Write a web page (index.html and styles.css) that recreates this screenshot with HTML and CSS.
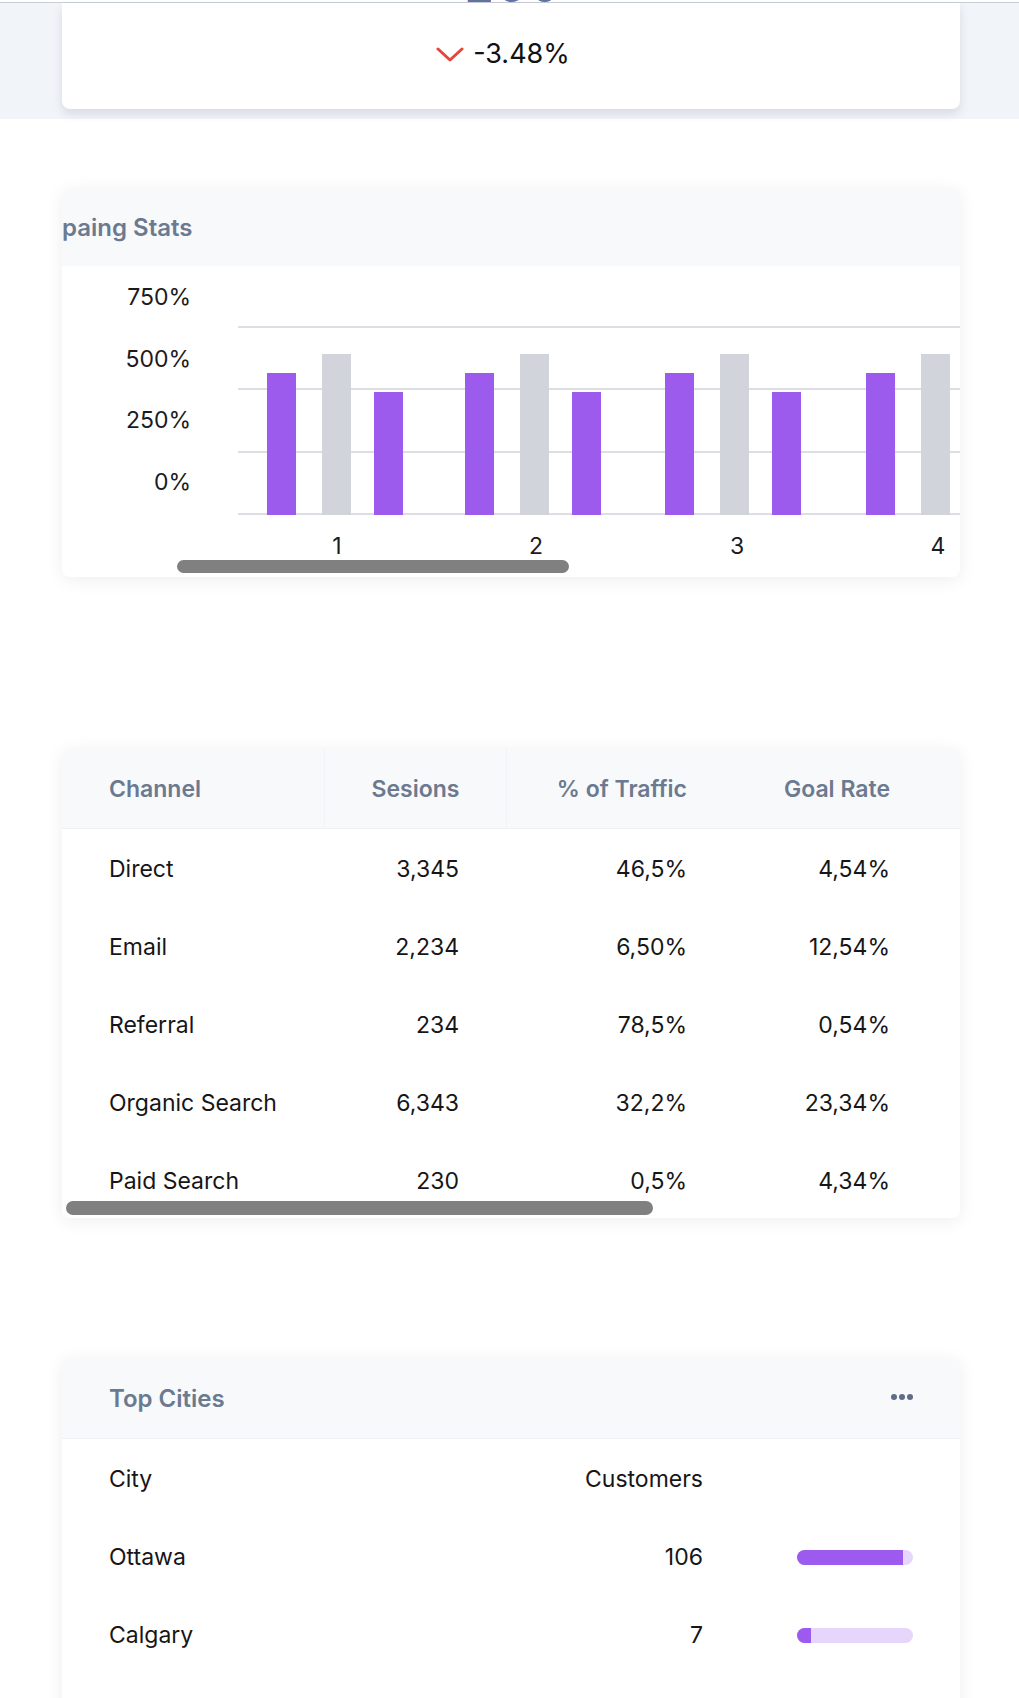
FILE: index.html
```html
<!DOCTYPE html>
<html lang="en">
<head>
<meta charset="utf-8">
<title>Dashboard</title>
<link rel="stylesheet" href="styles.css">
</head>
<body>
<div class="topbar"></div>
<div class="peek" aria-hidden="true"><span class="peek-num">250</span></div>

<section class="hero">
  <div class="stat-card">
    <div class="delta">
      <svg class="chev" width="28" height="15" viewBox="0 0 28 15"><polyline points="2,2 14,13 26,2" fill="none" stroke="#e1473d" stroke-width="3" stroke-linecap="round" stroke-linejoin="round"/></svg>
      <span class="delta-value">-3.48%</span>
    </div>
  </div>
</section>

<section class="card chart-card">
  <header class="card-head chart-head"><h2 class="card-title">paing Stats</h2></header>
  <div class="chart-body">
    <svg class="chart" width="898" height="311" viewBox="0 0 898 311">
      <g class="ylabels">
        <text x="129" y="39">750%</text>
        <text x="129" y="101">500%</text>
        <text x="129" y="162">250%</text>
        <text x="129" y="224">0%</text>
      </g>
      <g stroke="#dcdee3" stroke-width="2">
        <line x1="176" y1="61" x2="898" y2="61"/>
        <line x1="176" y1="123" x2="898" y2="123"/>
        <line x1="176" y1="186" x2="898" y2="186"/>
        <line x1="176" y1="248" x2="898" y2="248"/>
      </g>
      <g>
        <rect x="205" y="107" width="29" height="142" fill="#9d5bee"/>
        <rect x="260" y="88" width="29" height="161" fill="#d1d5db"/>
        <rect x="312" y="126" width="29" height="123" fill="#9d5bee"/>

        <rect x="403" y="107" width="29" height="142" fill="#9d5bee"/>
        <rect x="458" y="88" width="29" height="161" fill="#d1d5db"/>
        <rect x="510" y="126" width="29" height="123" fill="#9d5bee"/>

        <rect x="603" y="107" width="29" height="142" fill="#9d5bee"/>
        <rect x="658" y="88" width="29" height="161" fill="#d1d5db"/>
        <rect x="710" y="126" width="29" height="123" fill="#9d5bee"/>

        <rect x="804" y="107" width="29" height="142" fill="#9d5bee"/>
        <rect x="859" y="88" width="29" height="161" fill="#d1d5db"/>
        <rect x="911" y="126" width="29" height="123" fill="#9d5bee"/>
      </g>
      <g class="xlabels">
        <text x="275" y="288">1</text>
        <text x="474" y="288">2</text>
        <text x="675" y="288">3</text>
        <text x="876" y="288">4</text>
      </g>
    </svg>
  </div>
  <div class="thumb chart-thumb"></div>
</section>

<section class="card table-card">
  <table class="channels">
    <colgroup>
      <col class="c1"><col class="c2"><col class="c3"><col class="c4"><col class="c5">
    </colgroup>
    <thead>
      <tr>
        <th class="left">Channel</th>
        <th class="sep">Sesions</th>
        <th class="sep">% of Traffic</th>
        <th>Goal Rate</th>
        <th class="empty"></th>
      </tr>
    </thead>
    <tbody>
      <tr><td class="left">Direct</td><td>3,345</td><td>46,5%</td><td>4,54%</td><td class="empty"></td></tr>
      <tr><td class="left">Email</td><td>2,234</td><td>6,50%</td><td>12,54%</td><td class="empty"></td></tr>
      <tr><td class="left">Referral</td><td>234</td><td>78,5%</td><td>0,54%</td><td class="empty"></td></tr>
      <tr><td class="left">Organic Search</td><td>6,343</td><td>32,2%</td><td>23,34%</td><td class="empty"></td></tr>
      <tr><td class="left">Paid Search</td><td>230</td><td>0,5%</td><td>4,34%</td><td class="empty"></td></tr>
    </tbody>
  </table>
  <div class="thumb table-thumb"></div>
</section>

<section class="card cities-card">
  <header class="card-head cities-head">
    <h2 class="card-title">Top Cities</h2>
    <svg class="more" width="22" height="6" viewBox="0 0 22 6"><circle cx="3" cy="3" r="3"/><circle cx="11" cy="3" r="3"/><circle cx="19" cy="3" r="3"/></svg>
  </header>
  <div class="cities">
    <div class="city-row">
      <span>City</span><span class="num">Customers</span><span></span>
    </div>
    <div class="city-row">
      <span>Ottawa</span><span class="num">106</span>
      <div class="track"><div class="fill" style="width:91%"></div></div>
    </div>
    <div class="city-row">
      <span>Calgary</span><span class="num">7</span>
      <div class="track"><div class="fill" style="width:12%"></div></div>
    </div>
  </div>
</section>
</body>
</html>
```

FILE: styles.css
```css
* { box-sizing: border-box; }

html, body {
  margin: 0;
  padding: 0;
  background: #ffffff;
  font-family: Inter, "Noto Sans", "Liberation Sans", sans-serif;
  color: #161618;
}

body {
  position: relative;
  padding-bottom: 40px;
}

.topbar {
  height: 3px;
  background: #ffffff;
  border-bottom: 1px solid #c9cdd4;
}

.peek {
  position: absolute;
  top: 0;
  left: 464px;
  height: 3px;
  overflow: hidden;
  z-index: 2;
}

.peek-num {
  display: block;
  margin-top: -41px;
  font-size: 50px;
  line-height: 50px;
  font-weight: 400;
  color: #6272a0;
  letter-spacing: 2px;
}

.hero {
  background: #f1f4f9;
  height: 116px;
}

.stat-card {
  margin-left: 62px;
  width: 898px;
  height: 106px;
  background: #ffffff;
  border-radius: 0 0 8px 8px;
  box-shadow: 0 5px 10px rgba(40, 50, 70, 0.12);
  display: flex;
  align-items: flex-start;
  justify-content: center;
  padding-top: 30px;
  padding-right: 16px;
}

.delta {
  display: flex;
  align-items: center;
  gap: 9px;
  height: 40px;
}

.chev { display: block; margin-top: 3px; }

.delta-value {
  font-size: 27px;
  font-weight: 400;
  color: #111111;
}

.card {
  position: relative;
  width: 898px;
  margin-left: 62px;
  background: #ffffff;
  border-radius: 8px;
  box-shadow: 0 3px 18px rgba(0, 0, 0, 0.07);
  overflow: hidden;
}

.card-head {
  background: #f8f9fb;
  display: flex;
  align-items: center;
}

.card-title {
  margin: 0;
  font-size: 24px;
  font-weight: 600;
  color: #6b7a90;
}

.chart-card {
  margin-top: 69px;
  height: 389px;
}

.chart-head {
  height: 78px;
  padding-top: 1px;
}

.chart-body { height: 311px; }

.chart { display: block; }

.chart text {
  font-family: Inter, "Noto Sans", sans-serif;
  font-size: 23px;
  fill: #1b1b1d;
}

.ylabels text { text-anchor: end; }
.xlabels text { text-anchor: middle; }

.thumb {
  position: absolute;
  background: #808080;
  border-radius: 7px;
}

.chart-thumb {
  left: 115px;
  top: 372px;
  width: 392px;
  height: 13px;
}

.table-card {
  margin-top: 171px;
  height: 470px;
}

.channels {
  table-layout: fixed;
  border-collapse: collapse;
  width: 898px;
}

.c1 { width: 262px; }
.c2 { width: 182px; }
.c3 { width: 228px; }
.c4 { width: 203px; }
.c5 { width: 23px; }

.channels th,
.channels td {
  padding: 0 47px;
  text-align: right;
  white-space: nowrap;
}

.channels th {
  height: 80px;
  background: #f8f9fb;
  font-size: 23px;
  font-weight: 600;
  color: #6b7a90;
  border-bottom: 1px solid #eff1f4;
  padding-top: 2px;
}

.channels th.sep { border-left: 1px solid #f1f3f6; }

.channels td {
  height: 78px;
  padding-top: 3px;
  font-size: 23px;
  font-weight: 400;
  color: #161618;
}

.channels .left { text-align: left; }
.channels .empty { padding: 0; }

.table-thumb {
  left: 4px;
  bottom: 3px;
  width: 587px;
  height: 14px;
}

.cities-card {
  margin-top: 140px;
  padding-bottom: 80px;
}

.cities-head {
  height: 81px;
  padding: 0 47px;
  justify-content: space-between;
  border-bottom: 1px solid #eff1f4;
}

.more { display: block; fill: #5f6d89; margin-top: -2px; }

.cities { padding: 0 47px; }

.city-row {
  display: grid;
  grid-template-columns: 1fr auto 116px;
  column-gap: 94px;
  align-items: center;
  height: 78px;
  padding-top: 2px;
  font-size: 23px;
  color: #161618;
}

.city-row .num { text-align: right; }

.track {
  height: 15px;
  border-radius: 8px;
  background: #e6d6fb;
  overflow: hidden;
}

.fill {
  height: 100%;
  background: #9c5aee;
}
```
